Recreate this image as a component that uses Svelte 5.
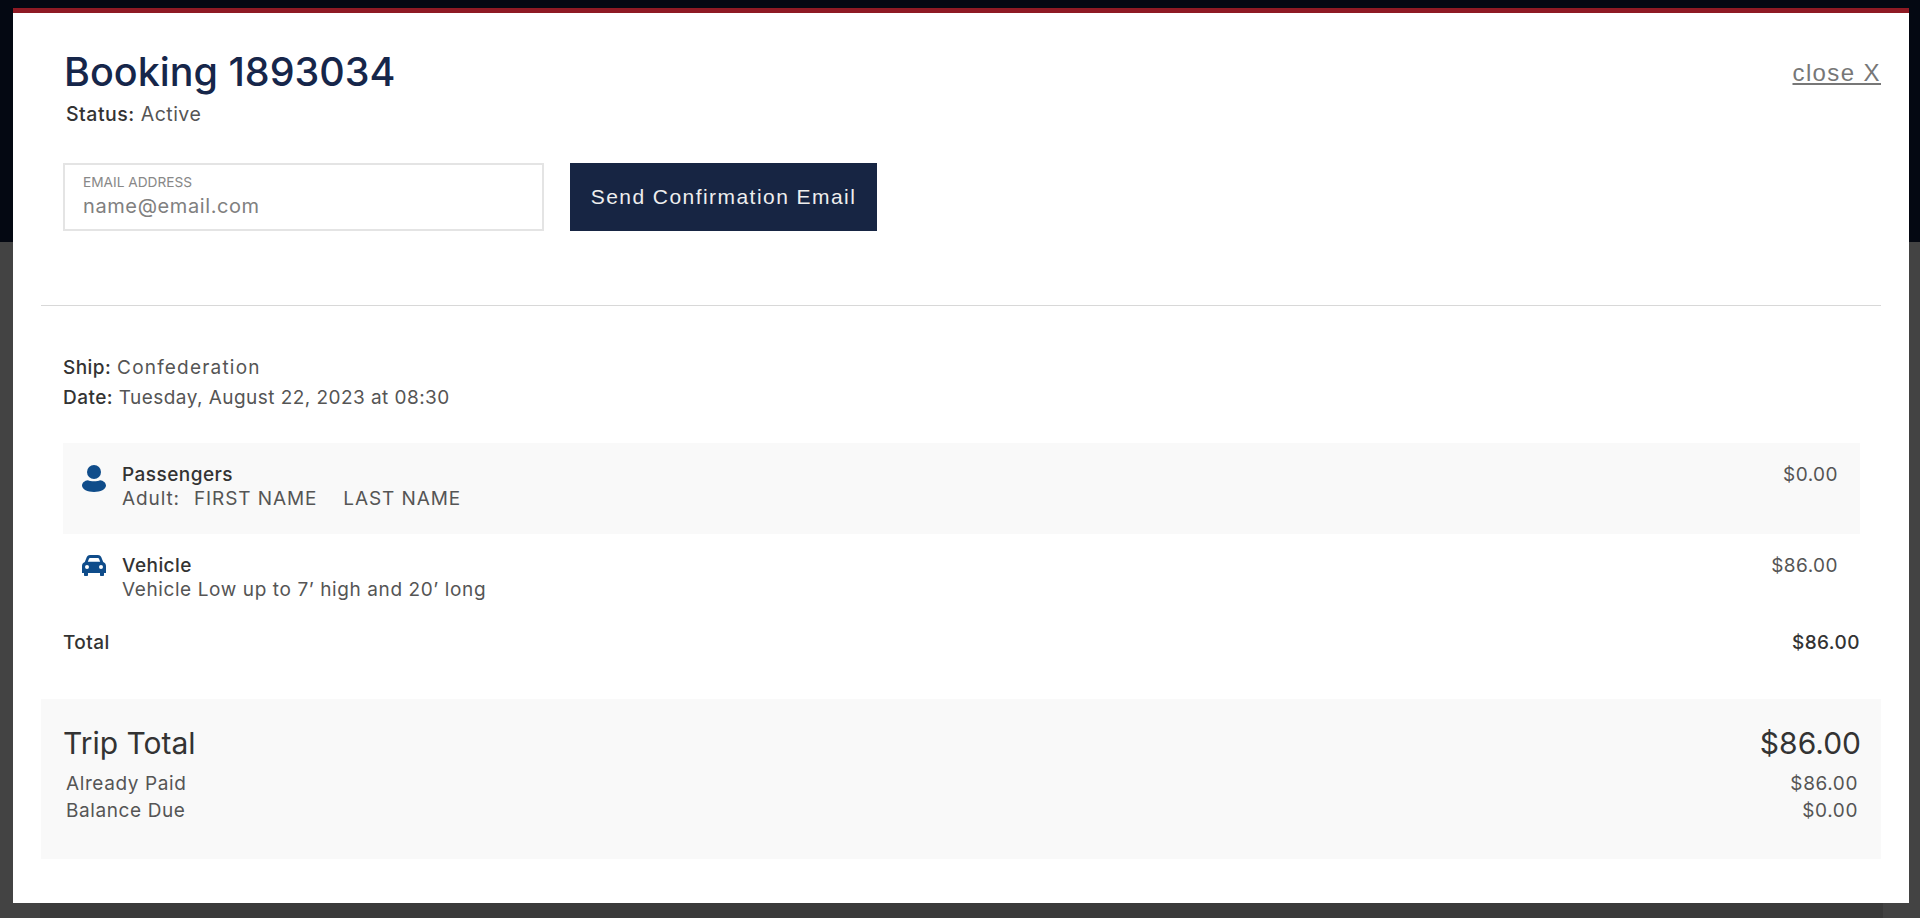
<script>
  const booking = { id: 1893034, status: 'Active', ship: 'Confederation', date: 'Tuesday, August 22, 2023 at 08:30' };
</script>

<div class="page">
  <div class="page__top"></div>
  <div class="page__rest"><div class="page__inner"></div></div>
</div>

<div class="modal">
  <header class="head">
    <div>
      <h1>Booking {booking.id}</h1>
      <p class="status"><b>Status:</b> {booking.status}</p>
    </div>
    <a class="close" href="#close">close X</a>
  </header>

  <form class="send">
    <label class="field">
      <span>EMAIL ADDRESS</span>
      <input type="text" placeholder="name@email.com" />
    </label>
    <button type="button">Send Confirmation Email</button>
  </form>

  <hr />

  <section class="trip">
    <p><b>Ship:</b> <span class="ship">{booking.ship}</span></p>
    <p><b>Date:</b> {booking.date}</p>
  </section>

  <section class="items">
    <div class="item item--shaded">
      <svg class="icon" viewBox="0 0 24 27" aria-hidden="true">
        <circle cx="12" cy="7" r="7" />
        <path d="M6 15.2C8 16.6 16 16.6 18 15.2C21.5 15.6 24 17.8 24 20.6C24 24.4 18.5 27 12 27C5.5 27 0 24.4 0 20.6C0 17.8 2.5 15.6 6 15.2Z" />
      </svg>
      <div class="item__text">
        <b>Passengers</b>
        <div class="names"><span>Adult:</span><span>FIRST NAME</span><span>LAST NAME</span></div>
      </div>
      <span class="price">$0.00</span>
    </div>
    <div class="item">
      <svg class="icon icon--car" viewBox="0 0 24 21" aria-hidden="true">
        <path fill-rule="evenodd" d="M8 0H16C17.4 0 18.6 .8 19.2 2L21.2 7C23 7.8 24 9.2 24 11V18H22V20C22 20.6 21.6 21 21 21H19C18.4 21 18 20.6 18 20V18H6V20C6 20.6 5.6 21 5 21H3C2.4 21 2 20.6 2 20V18H0V11C0 9.2 1 7.8 2.8 7L4.8 2C5.4 .8 6.6 0 8 0ZM8 3C7.5 3 7.2 3.2 7 3.7L5.8 6.8H18.2L17 3.7C16.8 3.2 16.5 3 16 3ZM5 10A2 2 0 1 0 5 14A2 2 0 1 0 5 10ZM19 10A2 2 0 1 0 19 14A2 2 0 1 0 19 10Z" />
      </svg>
      <div class="item__text">
        <b>Vehicle</b>
        <div class="desc">Vehicle Low up to 7’ high and 20’ long</div>
      </div>
      <span class="price">$86.00</span>
    </div>
    <div class="total"><b>Total</b><b>$86.00</b></div>
  </section>

  <section class="summary">
    <div class="summary__main"><span>Trip Total</span><span>$86.00</span></div>
    <div class="summary__row"><span>Already Paid</span><span>$86.00</span></div>
    <div class="summary__row"><span>Balance Due</span><span>$0.00</span></div>
  </section>
</div>

<style>
  :global(body) {
    margin: 0;
    background: #3f3f3f;
    font-family: Inter, "Open Sans", sans-serif;
    color: #555;
    overflow: hidden;
  }

  .page {
    height: 918px;
    display: flex;
    flex-direction: column;
  }
  .page__top {
    height: 242px;
    background: #040812;
  }
  .page__rest {
    flex: 1;
    background: #434343;
    padding: 0 37px 0 40px;
    display: flex;
  }
  .page__inner {
    flex: 1;
    background: #3a3a3a;
  }

  /* 弹窗 */
  .modal {
    position: absolute;
    top: 8px;
    left: 13px;
    width: 1896px;
    height: 895px;
    box-sizing: border-box;
    background: #fff;
    border-top: 5px solid #8e1a24;
    padding: 0 28px;
  }

  .head {
    display: flex;
    justify-content: space-between;
    padding: 34px 0 0 23px;
  }
  h1 {
    margin: 0;
    font-size: 39.5px;
    line-height: 50px;
    font-weight: 500;
    color: #16264a;
  }
  .status {
    margin: 5px 0 0 2px;
    font-size: 19.5px;
    letter-spacing: 0.5px;
    line-height: 24px;
  }
  b {
    font-weight: 500;
    color: #333;
  }
  .close {
    font-family: "Liberation Sans", Arial, sans-serif;
    font-size: 24px;
    letter-spacing: 1.4px;
    color: #777;
    margin-top: 12px;
    height: 30px;
  }

  .send {
    display: flex;
    gap: 26px;
    margin: 37px 0 0 22px;
  }
  .field {
    box-sizing: border-box;
    width: 481px;
    height: 68px;
    border: 2px solid #e4e4e4;
    padding: 9px 18px 0;
    display: block;
  }
  .field span {
    display: block;
    font-size: 13.7px;
    line-height: 17px;
    color: #888;
  }
  .field input {
    border: 0;
    padding: 0;
    margin-top: 1px;
    outline: 0;
    width: 100%;
    font: 20px/28px Inter, sans-serif;
    letter-spacing: 0.6px;
    background: transparent;
  }
  .field input::placeholder {
    color: #808080;
    opacity: 1;
  }
  button {
    width: 307px;
    height: 68px;
    border: 0;
    background: #172543;
    color: #eee;
    font-family: "Liberation Sans", Arial, sans-serif;
    font-size: 21px;
    letter-spacing: 1.45px;
  }

  hr {
    border: 0;
    border-top: 1px solid #d8d8d8;
    margin: 74px 0 0;
  }

  .trip {
    margin: 47px 0 0 22px;
    font-size: 19px;
    letter-spacing: 0.45px;
    line-height: 30px;
  }
  .trip p {
    margin: 0;
  }
  .ship {
    letter-spacing: 1.2px;
  }

  .items {
    margin: 30px 21px 0 22px;
    font-size: 19px;
    letter-spacing: 0.45px;
    line-height: 24px;
  }
  .item {
    display: flex;
    gap: 16px;
    height: 91px;
    padding: 20px 22px 0 19px;
    box-sizing: border-box;
  }
  .item--shaded {
    background: #f9f9f9;
  }
  .item__text {
    flex: 1;
  }
  .item__text b {
    display: block;
  }
  .icon {
    width: 24px;
    margin-top: 2px;
    align-self: flex-start;
    fill: #0f4c8a;
  }
  .icon--car {
    margin-top: 1px;
  }
  .names {
    display: flex;
    gap: 26px;
    letter-spacing: 0.9px;
  }
  .names span:first-child {
    margin-right: -12px;
  }
  .desc {
    letter-spacing: 0.6px;
  }
  .total {
    display: flex;
    justify-content: space-between;
    margin-top: 6px;
  }

  .summary {
    margin-top: 44px;
    height: 160px;
    box-sizing: border-box;
    background: #f9f9f9;
    padding: 24px 20px 0 22px;
    font-size: 19px;
    letter-spacing: 0.6px;
  }
  .summary__main {
    display: flex;
    justify-content: space-between;
    font-size: 30px;
    letter-spacing: 0;
    line-height: 40px;
    color: #333;
    margin-bottom: 7px;
  }
  .summary__row {
    display: flex;
    justify-content: space-between;
    line-height: 27px;
    padding: 0 3px 0 3px;
  }
</style>
